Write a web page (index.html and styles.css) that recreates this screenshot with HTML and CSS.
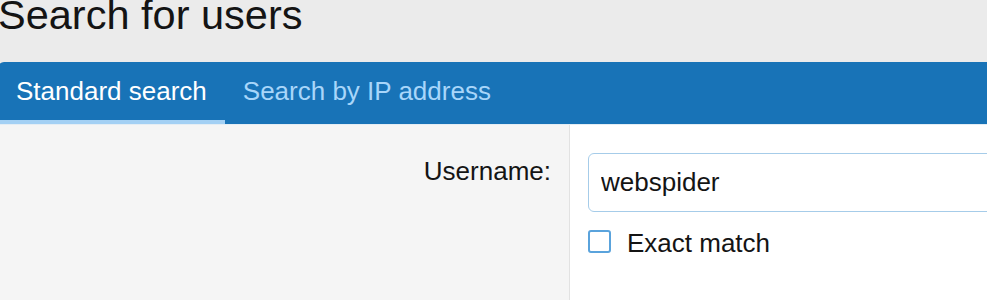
FILE: index.html
```html
<!DOCTYPE html>
<html lang="en">
<head>
<meta charset="utf-8">
<title>Search for users</title>
<link rel="stylesheet" href="styles.css">
</head>
<body>
<div class="page">
  <h1 class="title">Search for users</h1>
  <div class="block">
    <div class="tabs">
      <a class="tab is-active">Standard search</a>
      <a class="tab">Search by IP address</a>
    </div>
    <div class="block-body">
      <div class="form-row">
        <div class="row-label"><label for="username">Username:</label></div>
        <div class="row-input">
          <input id="username" class="input" type="text" value="webspider">
          <label class="check"><span class="check-box"></span><span class="check-text">Exact match</span></label>
        </div>
      </div>
    </div>
  </div>
</div>
</body>
</html>
```

FILE: styles.css
```css
html, body {
  margin: 0;
  padding: 0;
  overflow: hidden;
  background: #ebebeb;
}
body {
  font-family: "Liberation Sans", Arial, sans-serif;
  color: #141414;
}
.page {
  margin-left: -2px;
  width: 1100px;
}
.title {
  margin: -6px 0 27px;
  font-size: 41.5px;
  line-height: 41px;
  font-weight: normal;
  color: #141414;
}
.block {
  border-radius: 6px 6px 0 0;
  overflow: hidden;
}
.tabs {
  display: flex;
  background: #1873b7;
  border-bottom: 1px solid #e4edf4;
}
.tab {
  padding: 14px 18px 14px;
  font-size: 26px;
  line-height: 30px;
  color: #a8d6fa;
  border-bottom: 4px solid transparent;
  white-space: nowrap;
}
.tab.is-active {
  color: #ffffff;
  border-bottom-color: #a3d0f4;
}
.block-body {
  background: #ffffff;
}
.form-row {
  display: flex;
  min-height: 175px;
}
.row-label {
  width: 553px;
  padding: 31px 18px 0 0;
  text-align: right;
  background: #f5f5f5;
  border-right: 1px solid #e2e2e2;
  font-size: 26px;
  line-height: 30px;
}
.row-input {
  flex: 1;
  min-width: 0;
  overflow: hidden;
  padding: 28px 0 0 18px;
}
.input {
  display: block;
  box-sizing: border-box;
  width: 480px;
  height: 59px;
  margin: 0;
  padding: 0 12px;
  border: 1px solid #a6cce9;
  border-radius: 6px;
  background: #ffffff;
  font-family: "Liberation Sans", Arial, sans-serif;
  font-size: 26px;
  color: #141414;
  outline: none;
}
.check {
  display: flex;
  align-items: flex-start;
  margin-top: 16px;
  font-size: 26px;
  line-height: 30px;
}
.check-box {
  box-sizing: border-box;
  width: 23px;
  height: 23px;
  margin-top: 2px;
  margin-right: 16px;
  border: 2px solid #5aa3dc;
  border-radius: 3px;
  background: #ffffff;
}
```
